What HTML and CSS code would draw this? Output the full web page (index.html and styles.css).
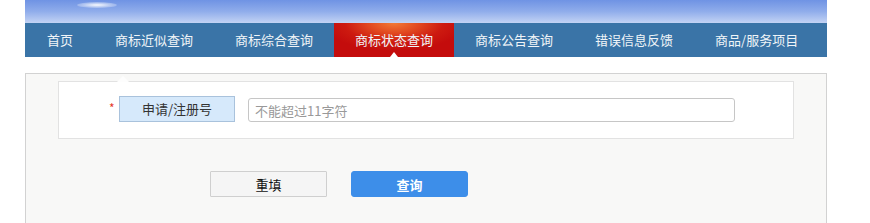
FILE: index.html
```html
<!DOCTYPE html>
<html lang="zh-CN">
<head>
    <meta charset="UTF-8">
    <meta name="viewport" content="width=device-width, initial-scale=1.0">
    <title>商标状态查询</title>
    <link rel="stylesheet" href="styles.css">
</head>
<body>
    <div class="page">
        <div class="banner"><span class="glow"></span></div>

        <ul class="nav">
            <li><a href="#">首页</a></li>
            <li><a href="#">商标近似查询</a></li>
            <li><a href="#">商标综合查询</a></li>
            <li class="active"><a href="#">商标状态查询</a></li>
            <li><a href="#">商标公告查询</a></li>
            <li><a href="#">错误信息反馈</a></li>
            <li><a href="#">商品/服务项目</a></li>
        </ul>

        <div class="panel">
            <div class="form-box">
                <div class="form-row">
                    <span class="required">*</span>
                    <label class="field-label" for="regno">申请/注册号</label>
                    <input id="regno" class="field-input" type="text" placeholder="不能超过11字符">
                </div>
            </div>

            <div class="buttons">
                <button class="btn btn-reset" type="button">重填</button>
                <button class="btn btn-search" type="button">查询</button>
            </div>
        </div>
    </div>
</body>
</html>
```

FILE: styles.css
```css
body {
    margin: 0;
    font-family: "Noto Sans CJK SC", "Liberation Sans", sans-serif;
    font-size: 13px;
    color: #333;
    background: #fff;
}

.page {
    width: 802px;
    margin-left: 25px;
}

.banner {
    height: 23px;
    position: relative;
    background: linear-gradient(to bottom, #6f93e4 0%, #90adeb 50%, #c3d3f4 100%);
    overflow: hidden;
}

.glow {
    position: absolute;
    left: 52px;
    top: 2px;
    width: 40px;
    height: 6px;
    border-radius: 50%;
    background: radial-gradient(ellipse at center, rgba(255,255,255,0.95) 0%, rgba(255,255,255,0.4) 50%, rgba(255,255,255,0) 100%);
}

.nav {
    display: flex;
    height: 34px;
    margin: 0;
    padding: 0;
    list-style: none;
    background: #3a74a7;
}

.nav li {
    position: relative;
}

.nav a {
    display: block;
    padding: 0 21px;
    line-height: 34px;
    color: #f0f4f8;
    text-decoration: none;
    white-space: nowrap;
}

.nav li:first-child a {
    padding: 0 21px 0 22px;
}

.nav .active a {
    background: radial-gradient(ellipse 70px 28px at 50% 0%, #f27a36 0%, #e24a20 35%, #cd1a10 70%, #c40c0c 100%);
}

.nav .active::after {
    content: "";
    position: absolute;
    left: 50%;
    bottom: 0;
    margin-left: -4px;
    border-left: 4px solid transparent;
    border-right: 4px solid transparent;
    border-bottom: 5px solid #fff;
}

.panel {
    margin-top: 16px;
    height: 143px;
    padding: 7px 32px 0;
    border: 1px solid #d2d2d2;
    border-bottom: none;
    background: #f8f8f7;
}

.form-box {
    position: relative;
    height: 58px;
    padding-top: 14px;
    border: 1px solid #e2e2e2;
    background: #fff;
    box-sizing: border-box;
}

.form-box::before {
    content: "";
    position: absolute;
    left: 58px;
    top: -6px;
    border-left: 6px solid transparent;
    border-right: 6px solid transparent;
    border-bottom: 6px solid #fdfdfd;
}

.form-row {
    display: flex;
    align-items: center;
    padding-left: 50px;
}

.required {
    width: 10px;
    color: #e43a2a;
    font-size: 12px;
    line-height: 12px;
    margin-top: -2px;
}

.field-label {
    width: 114px;
    height: 24px;
    line-height: 24px;
    text-align: center;
    border: 1px solid #a9c2dc;
    background: #d6e9fb;
    color: #333;
}

.field-input {
    width: 487px;
    height: 24px;
    margin-left: 13px;
    margin-top: 2px;
    padding: 0 6px;
    box-sizing: border-box;
    border: 1px solid #c6c6c6;
    border-radius: 3px;
    font-family: inherit;
    font-size: 13px;
    color: #333;
    outline: none;
}

.field-input::placeholder {
    color: #999;
}

.buttons {
    display: flex;
    gap: 24px;
    margin-top: 32px;
    padding-left: 152px;
}

.btn {
    width: 117px;
    height: 26px;
    font-family: inherit;
    font-size: 13px;
    cursor: pointer;
}

.btn-reset {
    border: 1px solid #cfcfcf;
    border-radius: 1px;
    background: #f5f5f5;
    color: #111;
}

.btn-search {
    border: 1px solid #3d8ee9;
    border-radius: 3px;
    background: #3d8ee9;
    color: #fff;
    font-weight: bold;
}
```
